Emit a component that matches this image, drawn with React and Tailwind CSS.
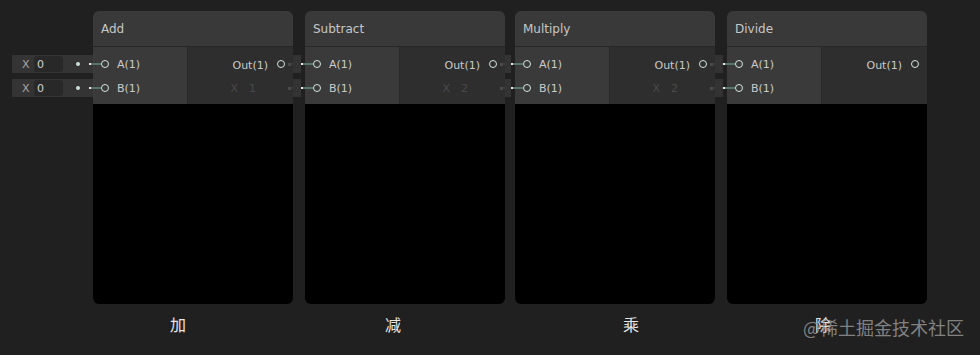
import React from "react";

const font = { fontFamily: '"DejaVu Sans", "Liberation Sans", sans-serif' };

function Port() {
  return <div className="w-[8px] h-[8px] rounded-full border-[1.5px] border-[#d3e6df] shrink-0" />;
}

function Stub() {
  return (
    <div className="flex items-center h-[18px] w-[81px] bg-[#343434] pl-[10px] text-[11px]">
      <span className="w-[7px] text-[#a6a6a6] leading-none">X</span>
      <div className="ml-[5px] w-[29px] h-[16px] bg-[#282828] rounded-[3px] pl-[3px] flex items-center text-[#d2d2d2] leading-none">0</div>
      <div className="ml-[13px] w-[4px] h-[4px] rounded-full bg-[#c9e0d8]" />
      <div className="ml-[9px] w-[2px] h-[2px] bg-[#e8e8e8]" />
      <div className="flex-1 h-[2px] bg-[#56766c]" />
    </div>
  );
}

function Gap({ w }) {
  return (
    <div className={`${w} shrink-0 mt-[44px] flex flex-col gap-[6px]`}>
      {[0, 1].map((i) => (
        <div key={i} className="flex items-center h-[18px]">
          <div className="flex-1 h-full bg-[#333333]" />
          <div className="w-[2px] h-[2px] bg-[#e8e8e8]" />
          <div className="w-[2px] h-[2px] bg-[#56766c]" />
        </div>
      ))}
    </div>
  );
}

function Tail({ show }) {
  return (
    <div className="w-[8px] h-full flex items-center">
      {show && (
        <>
          <div className="ml-[3px] w-[3px] h-[3px] bg-[#4a4a4a]" />
          <div className="flex-1 h-[2px] bg-[#3b3b3b]" />
        </>
      )}
    </div>
  );
}

function Node({ title, ghost, last }) {
  return (
    <div className="w-[200px] shrink-0 flex flex-col rounded-[6px] overflow-hidden" style={font}>
      <div className="h-[35px] bg-[#393939] px-[8px] flex items-center text-[12px] text-[#c6c6c6]">{title}</div>
      <div className="h-px bg-[#272727]" />
      <div className="flex h-[57px]">
        <div className="w-[94px] bg-[#3a3a3a] pt-[5px] flex flex-col text-[11px] text-[#cacaca]">
          {["A(1)", "B(1)"].map((t) => (
            <div key={t} className="flex items-center h-[24px]">
              <div className="w-[8px] h-[2px] bg-[#56766c]" />
              <Port />
              <span className="ml-[8px] leading-none">{t}</span>
            </div>
          ))}
        </div>
        <div className="flex-1 bg-[#2e2e2e] border-l border-[#2a2a2a] pt-[5px] flex flex-col text-[11px]">
          <div className="flex items-center justify-end h-[24px]">
            <span className="text-[#cacaca] leading-none mt-[2px]">Out(1)</span>
            <div className="ml-[9px]"><Port /></div>
            <Tail show={!last} />
          </div>
          <div className="flex items-center justify-end h-[24px]">
            {ghost && (
              <div className="flex items-center text-[#4a4a4a] leading-none mr-[29px]">
                <span>X</span>
                <span className="ml-[11px]">{ghost}</span>
              </div>
            )}
            <Tail show={!last} />
          </div>
        </div>
      </div>
      <div className="h-[200px] bg-black" />
    </div>
  );
}

export default function App() {
  const cjk = { fontFamily: '"Noto Sans CJK SC", "Noto Sans", sans-serif' };
  return (
    <div className="w-[980px] h-[355px] bg-[#202020] relative overflow-hidden" style={font}>
      <div className="flex pt-[11px] pl-[12px]">
        <div className="w-[81px] shrink-0 mt-[44px] flex flex-col gap-[6px]">
          <Stub />
          <Stub />
        </div>
        <Node title="Add" ghost="1" />
        <Gap w="w-[12px]" />
        <Node title="Subtract" ghost="2" />
        <Gap w="w-[10px]" />
        <Node title="Multiply" ghost="2" />
        <Gap w="w-[12px]" />
        <Node title="Divide" last />
      </div>
      <div className="flex pl-[93px] mt-[12px] text-[16px] leading-none text-[#e6e6e6]" style={cjk}>
        <div className="w-[212px] pl-[77px]">加</div>
        <div className="w-[210px] pl-[80px]">减</div>
        <div className="w-[212px] pl-[108px]">乘</div>
        <div className="w-[200px] pl-[88px]">除</div>
      </div>
      <div className="absolute left-[803px] top-[318px] text-[18px] leading-none text-[#9a9a9a] opacity-80" style={cjk}>
        @稀土掘金技术社区
      </div>
    </div>
  );
}
